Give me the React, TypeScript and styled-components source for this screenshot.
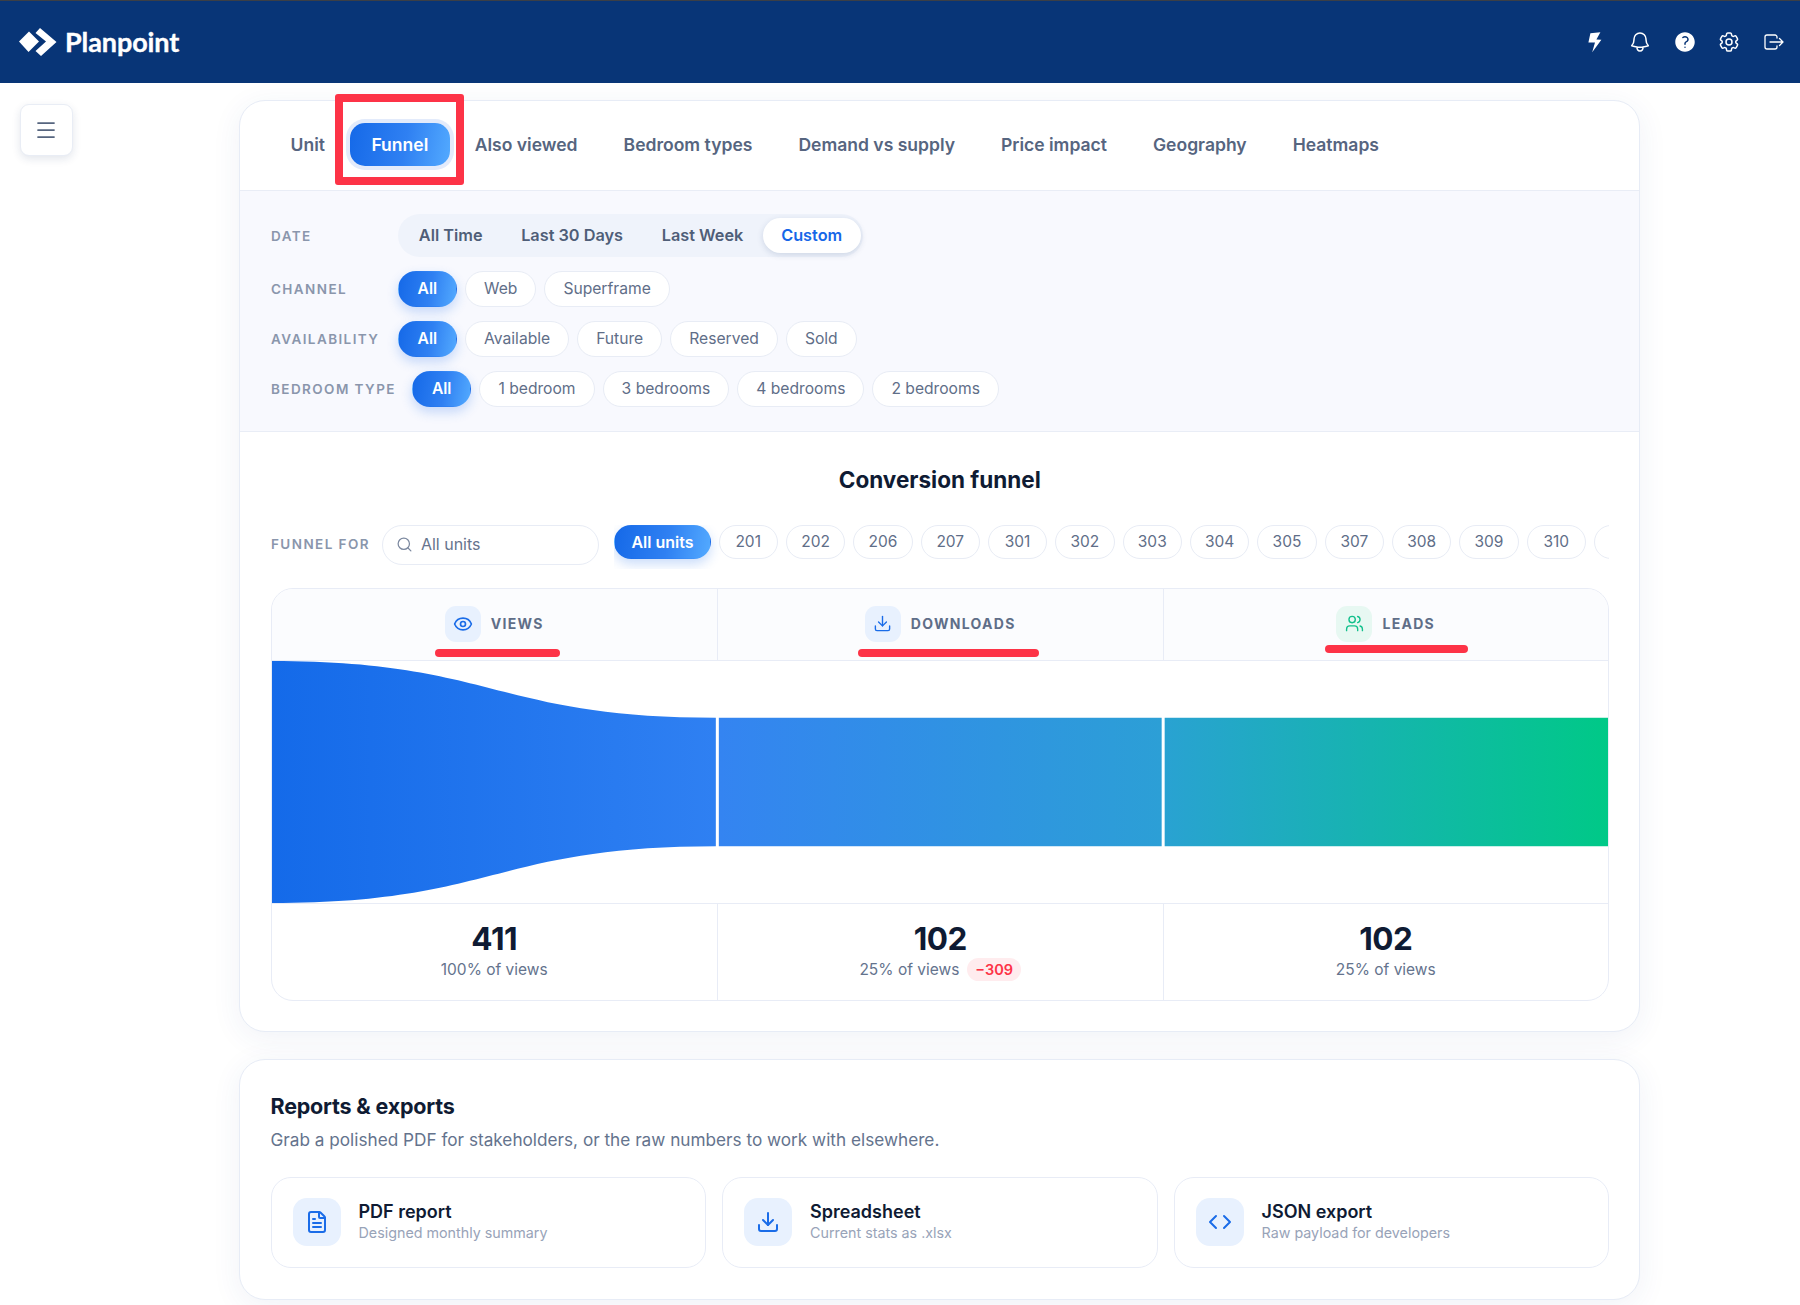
import React from 'react';
import styled, { createGlobalStyle } from 'styled-components';
import { Code, Download, Eye, FileText, Menu, Search, Users } from 'lucide-react';
import { HiOutlineBell, HiOutlineCog6Tooth, HiQuestionMarkCircle } from 'react-icons/hi2';

const GRADIENT = 'linear-gradient(100deg, #1569e8 0%, #2f80f2 55%, #53aaff 100%)';
const RED = '#fd3347';

const GlobalStyle = createGlobalStyle`
  html, body {
    margin: 0;
    padding: 0;
    background: #fff;
    overflow: hidden;
  }
  body {
    font-family: Inter, "Liberation Sans", sans-serif;
    color: #0f1b33;
  }
  * {
    box-sizing: border-box;
  }
`;

const Page = styled.div`
  position: relative;
  width: 1800px;
  height: 1305px;
  overflow: hidden;
`;

const Header = styled.header`
  display: flex;
  align-items: center;
  justify-content: space-between;
  height: 83px;
  padding: 0 14px 0 19px;
  background: #083577;
  border-top: 1.5px solid #3b3f46;
`;

const Logo = styled.div`
  display: flex;
  align-items: center;
  gap: 8px;
  padding-bottom: 1px;
  color: #fff;
  font-family: Lato, Inter, sans-serif;
  font-size: 27px;
  font-weight: 700;
  letter-spacing: -0.1px;
  -webkit-text-stroke: 0.35px #fff;
`;

const HeaderIcons = styled.div`
  display: flex;
  align-items: center;
  gap: 20.7px;
  color: #fff;
`;

const IconSlot = styled.span`
  display: flex;
  align-items: center;
  justify-content: center;
  width: 24px;
  height: 24px;
`;

const Body = styled.div`
  display: flex;
`;

const Side = styled.aside`
  width: 239px;
  flex-shrink: 0;
  padding: 21px 0 0 19.5px;
`;

const MenuButton = styled.button`
  display: flex;
  align-items: center;
  justify-content: center;
  width: 53px;
  height: 52px;
  padding: 0;
  color: #56657f;
  background: #fff;
  border: 1px solid #e9edf5;
  border-radius: 9px;
  box-shadow: 0 3px 8px rgba(25, 50, 100, 0.12);
`;

const Main = styled.main`
  display: flex;
  flex-direction: column;
  gap: 27px;
  width: 1401px;
  padding-top: 17px;
`;

const Card = styled.section`
  background: #fff;
  border: 1.5px solid #e7ecf6;
  border-radius: 26px;
  box-shadow: 0 6px 30px rgba(40, 70, 140, 0.07);
  overflow: hidden;
`;

const Tabs = styled.nav`
  display: flex;
  align-items: center;
  gap: 4px;
  height: 90px;
  padding: 0 0 3px 29.5px;
  border-bottom: 1.5px solid #e9edf6;
`;

const Tab = styled.div<{ $active?: boolean }>`
  padding: 0 ${(p) => (p.$active ? '21.5px' : '21px')};
  line-height: 43px;
  font-size: 17.55px;
  font-weight: 600;
  border-radius: 15px;
  color: ${(p) => (p.$active ? '#fff' : '#56657f')};
  background: ${(p) => (p.$active ? GRADIENT : 'transparent')};
  box-shadow: ${(p) => (p.$active ? '0 0 0 4px #e3ebfb' : 'none')};
`;

const Filters = styled.div`
  display: flex;
  flex-direction: column;
  gap: 14px;
  height: 241px;
  padding: 23px 30px 0 31px;
  background: #f8f9fe;
  border-bottom: 1.5px solid #e9edf6;
`;

const FilterRow = styled.div`
  display: flex;
  align-items: center;
  gap: 16px;
`;

const Label = styled.span<{ $width?: number }>`
  min-width: ${(p) => p.$width ?? 0}px;
  font-size: 13.5px;
  font-weight: 600;
  letter-spacing: 1.42px;
  text-transform: uppercase;
  color: #8a96ac;
  white-space: nowrap;
`;

const Segment = styled.div`
  display: flex;
  align-items: center;
  height: 43px;
  padding: 0 2px;
  background: #eff3fb;
  border-radius: 22px;
`;

const SegmentItem = styled.div<{ $active?: boolean }>`
  padding: 0 ${(p) => (p.$active ? '18.5px' : '19.3px')};
  line-height: 35px;
  font-size: 16.3px;
  font-weight: 600;
  border-radius: 18px;
  color: ${(p) => (p.$active ? '#1667e8' : '#4f5e78')};
  background: ${(p) => (p.$active ? '#fff' : 'transparent')};
  box-shadow: ${(p) => (p.$active ? '0 2px 6px rgba(30, 60, 120, 0.16)' : 'none')};
`;

const Chips = styled.div`
  display: flex;
  align-items: center;
  gap: 8px;
`;

const Chip = styled.div<{ $active?: boolean }>`
  flex-shrink: 0;
  padding: 0 ${(p) => (p.$active ? '19px' : '18px')};
  line-height: 34px;
  font-size: 15.65px;
  font-weight: ${(p) => (p.$active ? 600 : 400)};
  border-radius: 19px;
  border: 1.5px solid ${(p) => (p.$active ? 'transparent' : '#e8ecf5')};
  color: ${(p) => (p.$active ? '#fff' : '#5f6e88')};
  background: ${(p) => (p.$active ? GRADIENT : '#fff')};
  box-shadow: ${(p) => (p.$active ? '0 5px 12px rgba(30, 110, 235, 0.24)' : 'none')};
`;

const UnitChip = styled(Chip)`
  width: ${(p) => (p.$active ? 'auto' : '59.35px')};
  padding: 0 ${(p) => (p.$active ? '16px' : '0')};
  line-height: 32px;
  text-align: center;
  font-size: ${(p) => (p.$active ? '16px' : '15.5px')};
`;

const FunnelBody = styled.div`
  padding: 33px 30px 30px 30.5px;
`;

const Title = styled.h2`
  margin: 0 0 29.5px;
  text-align: center;
  font-size: 22.5px;
  font-weight: 700;
  line-height: 30px;
  color: #0f1b33;
`;

const FunnelFor = styled.div`
  display: flex;
  align-items: flex-start;
  gap: 12px;
  height: 63px;
`;

const FunnelLabel = styled(Label)`
  padding-left: 0.5px;
  line-height: 38px;
`;

const SearchBox = styled.div`
  display: flex;
  align-items: center;
  gap: 8px;
  flex-shrink: 0;
  width: 217px;
  height: 40px;
  padding: 0 13px 1px;
  font-size: 16px;
  color: #66748d;
  background: #fff;
  border: 1.5px solid #e8ecf5;
  border-radius: 20px;
`;

const UnitList = styled.div`
  flex: 1;
  min-width: 0;
  margin-left: 3.5px;
  padding: 0 0 10px;
  overflow: hidden;
`;

const FunnelTable = styled.div`
  border: 1.5px solid #e8ecf6;
  border-radius: 22px;
  overflow: hidden;
`;

const Columns = styled.div`
  display: grid;
  grid-template-columns: repeat(3, 1fr);
`;

const Heads = styled(Columns)`
  height: 72px;
  background: #fbfcfe;
  border-bottom: 1.5px solid #e8ecf6;
`;

const Head = styled.div`
  display: flex;
  align-items: center;
  justify-content: center;
  gap: 10px;
  padding-bottom: 1px;
  & + & {
    border-left: 1px solid #e8ecf6;
  }
`;

const IconBadge = styled.span<{ $green?: boolean; $large?: boolean }>`
  display: flex;
  align-items: center;
  justify-content: center;
  flex-shrink: 0;
  width: ${(p) => (p.$large ? 48 : 36)}px;
  height: ${(p) => (p.$large ? 48 : 36)}px;
  border-radius: ${(p) => (p.$large ? 14 : 11)}px;
  color: ${(p) => (p.$green ? '#12c08c' : '#1a6ce8')};
  background: ${(p) => (p.$green ? '#e7f8f2' : '#e8f1fe')};
`;

const HeadText = styled.span`
  font-size: 14px;
  font-weight: 700;
  letter-spacing: 1.3px;
  color: #5f6e88;
`;

const ChartSvg = styled.svg`
  display: block;
  width: 100%;
  height: 242px;
`;

const Stats = styled(Columns)`
  height: 97px;
  border-top: 1.5px solid #e8ecf6;
`;

const Stat = styled.div`
  display: flex;
  flex-direction: column;
  align-items: center;
  justify-content: center;
  padding-bottom: 2px;
  & + & {
    border-left: 1px solid #e8ecf6;
  }
`;

const StatValue = styled.div`
  font-size: 31.5px;
  font-weight: 700;
  line-height: 38px;
  letter-spacing: -0.5px;
  color: #0f1b33;
`;

const StatSub = styled.div`
  display: flex;
  align-items: center;
  gap: 8px;
  height: 24px;
  font-size: 15.5px;
  color: #64738d;
`;

const Delta = styled.span`
  padding: 0 8px;
  line-height: 23px;
  font-size: 14.5px;
  font-weight: 600;
  color: ${RED};
  background: #ffecee;
  border-radius: 12px;
`;

const Reports = styled(Card)`
  padding: 31px 30px 31px 30.5px;
`;

const ReportsTitle = styled.h3`
  margin: 0;
  font-size: 21.5px;
  font-weight: 700;
  line-height: 30px;
  letter-spacing: -0.2px;
  color: #0f1b33;
`;

const ReportsSub = styled.p`
  margin: 7px 0 25px;
  font-size: 17.2px;
  line-height: 24px;
  color: #64738d;
`;

const ExportGrid = styled.div`
  display: grid;
  grid-template-columns: repeat(3, 1fr);
  gap: 16px;
`;

const ExportCard = styled.div`
  display: flex;
  align-items: center;
  gap: 18px;
  height: 91px;
  padding: 0 21px;
  border: 1.5px solid #e8ecf6;
  border-radius: 20px;
`;

const ExportTitle = styled.div`
  font-size: 18px;
  font-weight: 600;
  line-height: 22px;
  color: #0f1b33;
`;

const ExportSub = styled.div`
  font-size: 14.3px;
  line-height: 20px;
  color: #98a3b8;
`;

const Underline = styled.div`
  position: absolute;
  height: 8px;
  background: ${RED};
  border-radius: 4px;
`;

const MarkBox = styled.div`
  position: absolute;
  left: 335px;
  top: 94px;
  width: 129px;
  height: 91px;
  border: 8px solid ${RED};
  border-radius: 3px;
`;

const dates = ['All Time', 'Last 30 Days', 'Last Week'];
const units = ['201', '202', '206', '207', '301', '302', '303', '304', '305', '307', '308', '309', '310'];
const marks = [
  { left: 435, top: 649, width: 125 },
  { left: 858, top: 649, width: 181 },
  { left: 1325, top: 645, width: 143 },
];

const filterRows = [
  { label: 'Channel', options: ['Web', 'Superframe'] },
  { label: 'Availability', options: ['Available', 'Future', 'Reserved', 'Sold'] },
  { label: 'Bedroom type', options: ['1 bedroom', '3 bedrooms', '4 bedrooms', '2 bedrooms'] },
];

const LogoMark = () => (
  <svg width="38" height="28" viewBox="0 0 38 28" fill="#fff">
    <polygon points="0,13.5 10,3.5 20,13.5 9.5,24" />
    <polygon points="21,0 37.5,14 22,28 16.5,23 27,13.5 16.5,5" />
  </svg>
);

const BoltIcon = () => (
  <svg width="14" height="21" viewBox="0 0 14 21" fill="#fff">
    <polygon points="2.4,1.2 12.4,0.2 8.4,7.6 13.4,7.8 4.2,20.2 7,10.6 0.4,10.6" />
  </svg>
);

const ExitIcon = () => (
  <svg width="20" height="16" viewBox="0 0 20 16" fill="none" stroke="#fff" strokeWidth="1.3" strokeLinecap="round" strokeLinejoin="round">
    <path d="M13 4V3A2 2 0 0 0 11 1H3A2 2 0 0 0 1 3V13A2 2 0 0 0 3 15H11A2 2 0 0 0 13 13V12" />
    <path d="M6 8H19M15.5 4.5L19 8L15.5 11.5" />
  </svg>
);

const Funnel = () => (
  <ChartSvg viewBox="0 0 1337 243" preserveAspectRatio="none">
    <defs>
      <linearGradient id="a" x1="0" x2="1" y1="0" y2="0">
        <stop offset="0" stopColor="#146ae9" />
        <stop offset="1" stopColor="#2f80f2" />
      </linearGradient>
      <linearGradient id="b" x1="0" x2="1" y1="0" y2="0">
        <stop offset="0" stopColor="#3484f1" />
        <stop offset="1" stopColor="#2c9fd6" />
      </linearGradient>
      <linearGradient id="c" x1="0" x2="1" y1="0" y2="0">
        <stop offset="0" stopColor="#29a2d2" />
        <stop offset="1" stopColor="#00c987" />
      </linearGradient>
    </defs>
    <path d="M0 0 C 223 0, 223 57, 444 57 L 444 186 C 223 186, 223 243, 0 243 Z" fill="url(#a)" />
    <rect x="447" y="57" width="443" height="129" fill="url(#b)" />
    <rect x="893" y="57" width="444" height="129" fill="url(#c)" />
  </ChartSvg>
);

export default function App() {
  return (
    <Page>
      <GlobalStyle />
      <Header>
        <Logo>
          <LogoMark />
          Planpoint
        </Logo>
        <HeaderIcons>
          <IconSlot><BoltIcon /></IconSlot>
          <IconSlot><HiOutlineBell size={24} /></IconSlot>
          <IconSlot><HiQuestionMarkCircle size={24} /></IconSlot>
          <IconSlot><HiOutlineCog6Tooth size={24} /></IconSlot>
          <IconSlot><ExitIcon /></IconSlot>
        </HeaderIcons>
      </Header>
      <Body>
        <Side>
          <MenuButton>
            <Menu size={24} strokeWidth={1.75} />
          </MenuButton>
        </Side>
        <Main>
          <Card>
            <Tabs>
              <Tab>Unit</Tab>
              <Tab $active>Funnel</Tab>
              <Tab>Also viewed</Tab>
              <Tab>Bedroom types</Tab>
              <Tab>Demand vs supply</Tab>
              <Tab>Price impact</Tab>
              <Tab>Geography</Tab>
              <Tab>Heatmaps</Tab>
            </Tabs>
            <Filters>
              <FilterRow>
                <Label $width={110.5}>Date</Label>
                <Segment>
                  {dates.map((d) => (
                    <SegmentItem key={d}>{d}</SegmentItem>
                  ))}
                  <SegmentItem $active>Custom</SegmentItem>
                </Segment>
              </FilterRow>
              {filterRows.map((row) => (
                <FilterRow key={row.label}>
                  <Label $width={110.5}>{row.label}</Label>
                  <Chips>
                    <Chip $active>All</Chip>
                    {row.options.map((o) => (
                      <Chip key={o}>{o}</Chip>
                    ))}
                  </Chips>
                </FilterRow>
              ))}
            </Filters>
            <FunnelBody>
              <Title>Conversion funnel</Title>
              <FunnelFor>
                <FunnelLabel>Funnel for</FunnelLabel>
                <SearchBox>
                  <Search size={17} color="#7b889f" strokeWidth={1.75} />
                  All units
                </SearchBox>
                <UnitList>
                  <Chips>
                    <UnitChip $active>All units</UnitChip>
                    {units.map((u) => (
                      <UnitChip key={u}>{u}</UnitChip>
                    ))}
                    <UnitChip>&nbsp;</UnitChip>
                  </Chips>
                </UnitList>
              </FunnelFor>
              <FunnelTable>
                <Heads>
                  <Head>
                    <IconBadge><Eye size={20} strokeWidth={2} /></IconBadge>
                    <HeadText>VIEWS</HeadText>
                  </Head>
                  <Head>
                    <IconBadge><Download size={19} strokeWidth={1.75} /></IconBadge>
                    <HeadText>DOWNLOADS</HeadText>
                  </Head>
                  <Head>
                    <IconBadge $green><Users size={19} strokeWidth={1.75} /></IconBadge>
                    <HeadText>LEADS</HeadText>
                  </Head>
                </Heads>
                <Funnel />
                <Stats>
                  <Stat>
                    <StatValue>411</StatValue>
                    <StatSub>100% of views</StatSub>
                  </Stat>
                  <Stat>
                    <StatValue>102</StatValue>
                    <StatSub>25% of views <Delta>−309</Delta></StatSub>
                  </Stat>
                  <Stat>
                    <StatValue>102</StatValue>
                    <StatSub>25% of views</StatSub>
                  </Stat>
                </Stats>
              </FunnelTable>
            </FunnelBody>
          </Card>
          <Reports>
            <ReportsTitle>Reports &amp; exports</ReportsTitle>
            <ReportsSub>Grab a polished PDF for stakeholders, or the raw numbers to work with elsewhere.</ReportsSub>
            <ExportGrid>
              <ExportCard>
                <IconBadge $large><FileText size={24} strokeWidth={2} /></IconBadge>
                <div>
                  <ExportTitle>PDF report</ExportTitle>
                  <ExportSub>Designed monthly summary</ExportSub>
                </div>
              </ExportCard>
              <ExportCard>
                <IconBadge $large><Download size={24} strokeWidth={2} /></IconBadge>
                <div>
                  <ExportTitle>Spreadsheet</ExportTitle>
                  <ExportSub>Current stats as .xlsx</ExportSub>
                </div>
              </ExportCard>
              <ExportCard>
                <IconBadge $large><Code size={24} strokeWidth={2} /></IconBadge>
                <div>
                  <ExportTitle>JSON export</ExportTitle>
                  <ExportSub>Raw payload for developers</ExportSub>
                </div>
              </ExportCard>
            </ExportGrid>
          </Reports>
        </Main>
      </Body>
      <MarkBox />
      {marks.map((m) => (
        <Underline key={m.left} style={{ left: m.left, top: m.top, width: m.width }} />
      ))}
    </Page>
  );
}
